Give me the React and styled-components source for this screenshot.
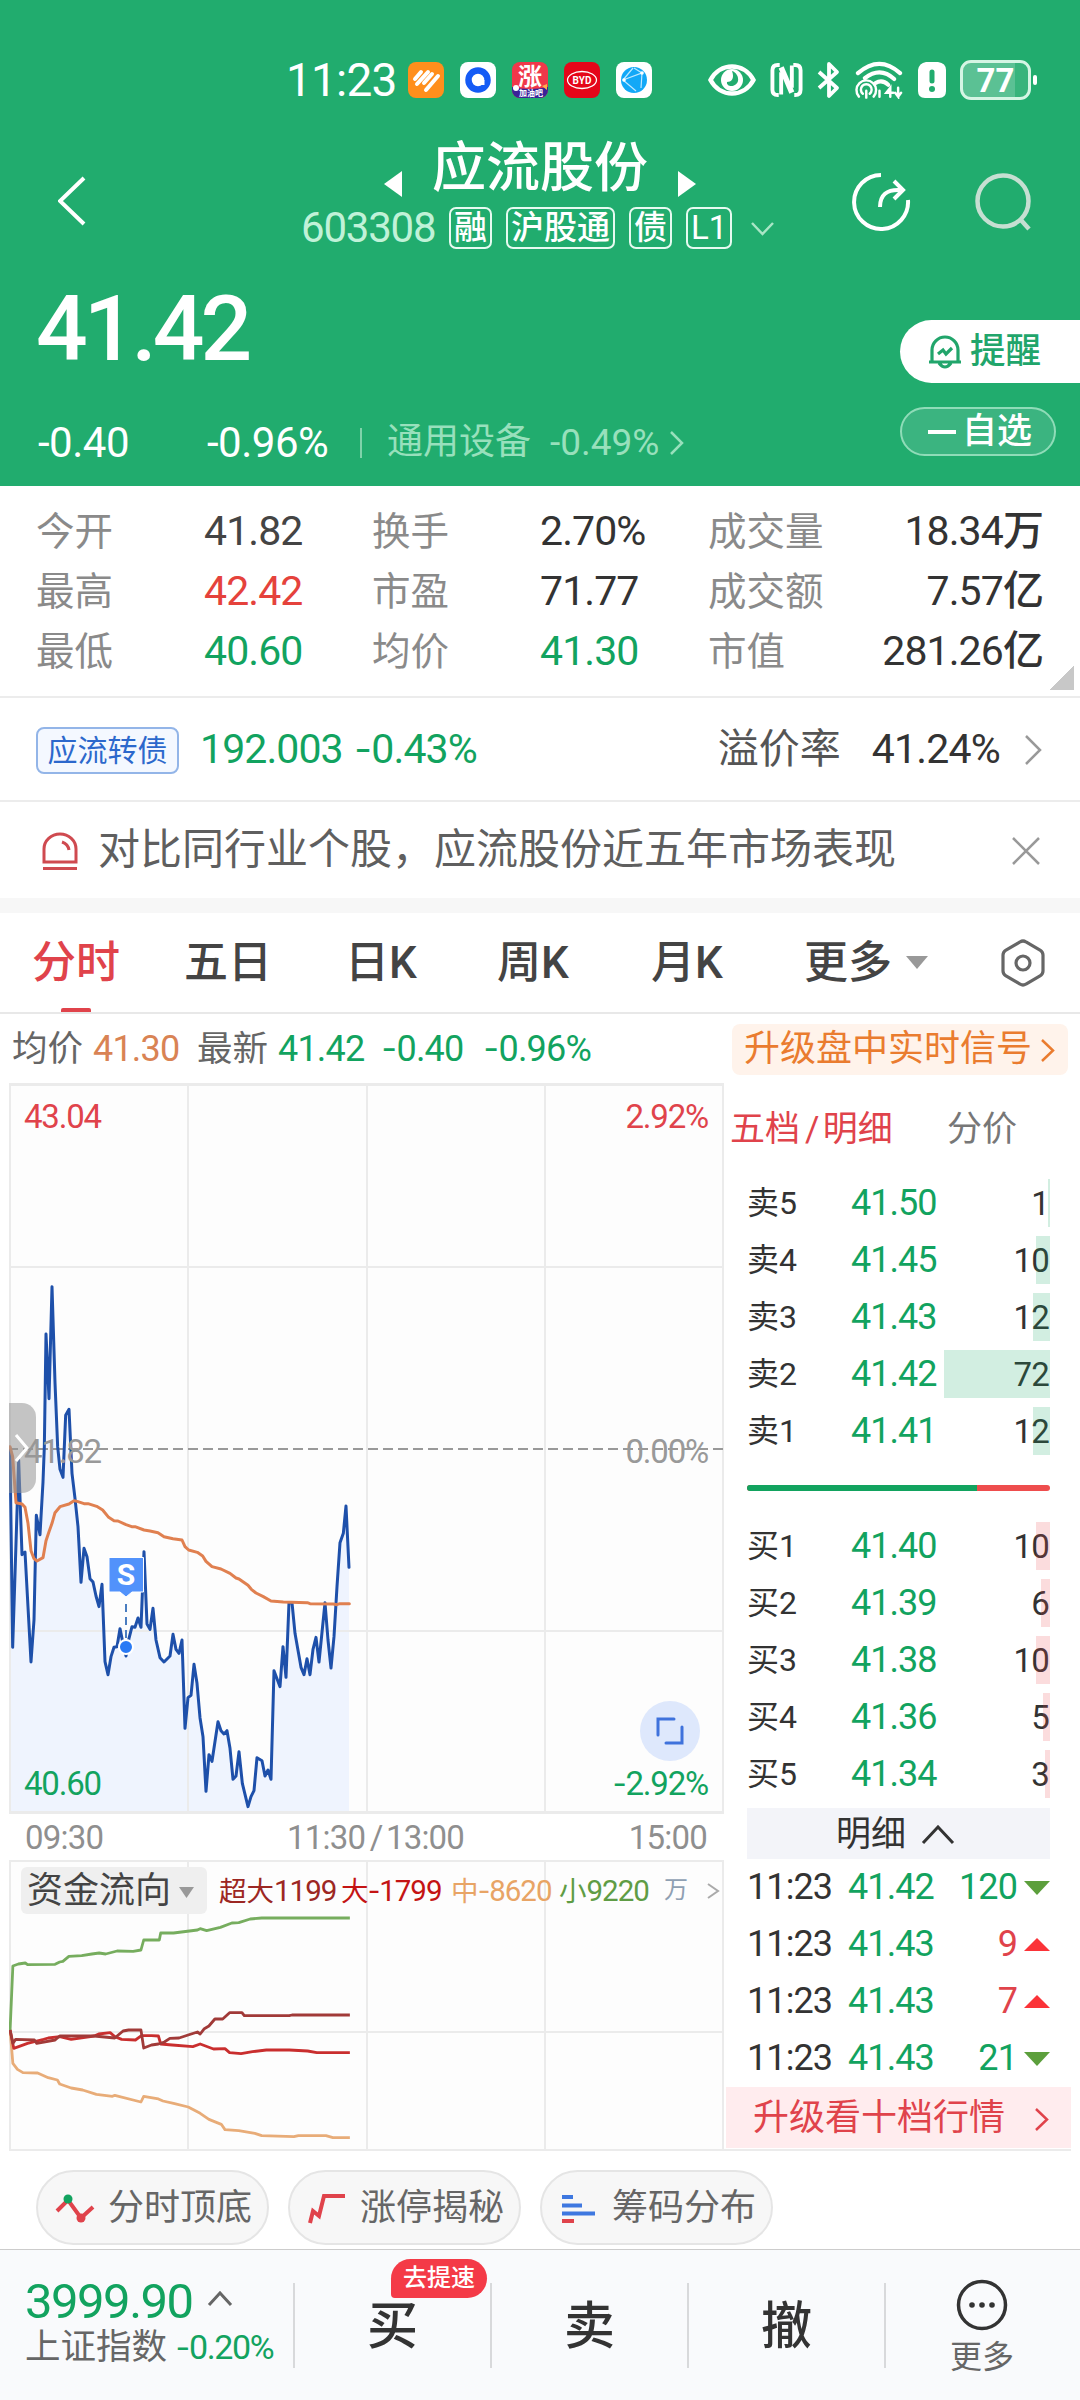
import React from "react";
import styled, { createGlobalStyle } from "styled-components";

const GREEN = "#12a35f";
const RED = "#e0434b";

const stats = [
  ["今开", "41.82", "#444"],
  ["换手", "2.70%", "#333"],
  ["成交量", "18.34万", "#333"],
  ["最高", "42.42", "#e5423c"],
  ["市盈", "71.77", "#333"],
  ["成交额", "7.57亿", "#333"],
  ["最低", "40.60", GREEN],
  ["均价", "41.30", GREEN],
  ["市值", "281.26亿", "#333"],
];

const asks = [
  ["卖5", "41.50", 1, 2],
  ["卖4", "41.45", 10, 14],
  ["卖3", "41.43", 12, 17],
  ["卖2", "41.42", 72, 106],
  ["卖1", "41.41", 12, 17],
];

const bids = [
  ["买1", "41.40", 10, 14],
  ["买2", "41.39", 6, 9],
  ["买3", "41.38", 10, 14],
  ["买4", "41.36", 5, 7],
  ["买5", "41.34", 3, 5],
];

const deals = [
  ["11:23", "41.42", 120, false],
  ["11:23", "41.43", 9, true],
  ["11:23", "41.43", 7, true],
  ["11:23", "41.43", 21, false],
];

// chart series, three units per pixel
const priceLine =
  "30,85 38,682 48,370 56,120 66,404 75,396 93,726 102,600 109,286 120,344 129,186 133,80 138,-258 147,-64 156,-400 165,-112 173,80 180,148 189,172 197,-14 207,-32 216,160 225,235 234,320 243,487 252,385 261,410 270,476 279,486 288,528 297,560 306,493 315,725 324,764 333,710 342,682 351,680 360,626 369,670 378,708 387,655 396,620 405,622 414,594 423,622 432,395 441,612 450,628 459,565 468,660 480,713 492,726 510,708 519,643 528,688 537,700 546,660 555,925 564,833 573,826 582,733 591,790 600,893 609,950 618,1114 627,1004 636,1024 654,905 663,932 672,942 681,932 690,985 699,1078 708,1068 717,995 727,1090 744,1160 753,1130 762,1112 771,1013 786,1022 795,1068 804,1050 813,1078 822,752 840,800 849,680 858,772 867,548 876,548 885,640 903,742 912,764 921,716 930,764 939,688 948,652 957,726 975,548 984,660 993,744 1002,650 1011,500 1020,368 1030,340 1038,258 1047,442";
const avgLine =
  "30,80 38,110 48,248 66,252 75,262 84,310 93,392 102,416 111,423 129,413 138,362 147,335 156,310 165,278 180,260 207,252 222,242 234,245 252,251 264,251 290,259 308,270 326,292 342,302 354,303 378,314 395,320 405,320 432,330 450,333 474,338 492,350 519,356 546,360 555,380 566,390 592,397 608,408 618,424 636,440 663,447 690,460 708,474 717,477 744,496 754,508 768,519 790,530 813,543 850,546 922,548 930,551 1000,552 1010,554 1020,551 1048,551";

const flows = [
  [
    "#e8ac78",
    "22,570 28,670 38,688 50,698 82,699 105,713 125,720 130,732 155,744 180,750 210,763 245,769 250,766 307,786 313,769 345,777 355,783 378,790 410,801 436,820 455,838 482,853 490,869 520,872 555,880 570,887 640,890 650,887 710,887 725,893 762,893",
  ],
  [
    "#76ad5e",
    "22,570 28,378 40,372 55,369 60,374 120,373 130,366 137,364 150,349 178,347 200,342 216,339 230,342 255,333 290,334 307,330 313,300 347,300 350,279 378,279 430,270 436,266 450,272 480,262 505,249 520,248 545,237 570,234 762,234",
  ],
  [
    "#c92e2e",
    "22,570 30,625 60,610 95,598 105,594 130,590 155,598 205,588 215,582 240,578 250,590 265,598 295,600 308,587 330,587 345,588 350,612 375,615 420,620 436,612 465,627 490,626 500,638 525,641 550,635 580,630 630,630 670,633 690,638 762,638",
  ],
  [
    "#a13a38",
    "22,570 28,610 34,598 75,600 80,610 120,600 130,588 205,588 250,594 268,573 280,570 307,570 313,624 330,615 345,612 358,606 370,595 390,594 430,576 436,582 445,566 455,558 468,537 485,537 500,518 527,518 532,527 630,527 636,525 762,525",
  ],
];

const arrows = {
  left: (w, h) => `M${w - 2} 2L2 ${h / 2}L${w - 2} ${h - 2}`,
  right: (w, h) => `M2 2L${w - 2} ${h / 2}L2 ${h - 2}`,
  up: (w, h) => `M2 ${h - 2}L${w / 2} 2L${w - 2} ${h - 2}`,
  down: (w, h) => `M2 2L${w / 2} ${h - 2}L${w - 2} 2`,
};

function Chevron({ dir = "right", w, h, color, thick = 2.5 }) {
  return (
    <svg width={w} height={h} fill="none">
      <path d={arrows[dir](w, h)} stroke={color} strokeWidth={thick} />
    </svg>
  );
}

function Triangle({ points, w, h, color }) {
  return (
    <svg width={w} height={h}>
      <polygon points={points} fill={color} />
    </svg>
  );
}

function StatusIcons() {
  return (
    <>
      <AppIcons>
        <svg width="36" height="36" viewBox="0 0 36 36">
          <rect width="36" height="36" rx="8" fill="#ff8f1c" />
          <path d="M7 17L13 10M9 22L20 10M16 21L24 12M18 28L30 14" stroke="#fff" strokeWidth="4" strokeLinecap="round" />
        </svg>
        <svg width="36" height="36" viewBox="0 0 36 36">
          <rect width="36" height="36" rx="8" fill="#fff" />
          <circle cx="18" cy="18" r="9.5" fill="none" stroke="#155bf5" strokeWidth="6.5" />
          <path d="M18 18h6.500v5h-4z" fill="#fff" />
        </svg>
        <svg width="36" height="36" viewBox="0 0 36 36">
          <rect width="36" height="36" rx="8" fill="#f0384a" />
          <path d="M0 25q18 4 36 0v3a8 8 0 0 1-8 8H8a8 8 0 0 1-8-8z" fill="#3a2298" />
          <circle cx="4" cy="26" r="3" fill="#fff" />
          <path d="M30 24l5-2v6z" fill="#ffb24a" />
          <IconText x="18" y="23" $size={24}>涨</IconText>
          <IconText x="19" y="34" $size={8}>加油吧</IconText>
        </svg>
        <svg width="36" height="36" viewBox="0 0 36 36">
          <rect width="36" height="36" rx="8" fill="#e50619" />
          <ellipse cx="18" cy="18" rx="14.500" ry="8.5" fill="none" stroke="#fff" strokeWidth="1.3" />
          <IconText x="18" y="21.5" $size={10}>BYD</IconText>
        </svg>
        <svg width="36" height="36" viewBox="0 0 36 36">
          <rect width="36" height="36" rx="8" fill="#fff" />
          <circle cx="18" cy="18" r="13" fill="#12a8f7" />
          <path d="M7 18L26 11L25 26M7 18L20 29M7 18L17 6M26 11L18 6" stroke="#bfe8ff" strokeWidth="1.2" fill="none" />
          <circle cx="8" cy="18" r="1.8" fill="#fff" />
          <circle cx="26" cy="11" r="1.8" fill="#fff" />
        </svg>
      </AppIcons>
      <svg width="48" height="34" viewBox="0 0 48 34">
        <path d="M2.5 17C12-1 36-1 45.500 17C36 35 12 35 2.500 17Z" fill="none" stroke="#fff" strokeWidth="4.500" />
        <circle cx="24" cy="17" r="11" fill="#fff" />
        <path d="M24 8C27 16 23 19 19 19C18 24 28 25 30 18C31 14 28 9 24 8Z" fill="#21ac6e" />
      </svg>
      <svg width="33" height="36" viewBox="0 0 34 36" fill="none" stroke="#fff">
        <path d="M10 2.500H8Q2.500 2.500 2.500 8V28Q2.500 33.500 8 33.500H9M24 2.500H26Q31.500 2.500 31.500 8V28Q31.500 33.500 26 33.500H25" strokeWidth="4" />
        <path d="M11.500 33V10M22.500 3V26" strokeWidth="4" />
        <path d="M11.500 5L22.500 31" strokeWidth="5.500" />
      </svg>
      <svg width="24" height="38" viewBox="0 0 24 38">
        <path d="M2 11L20 27L12 35V3L20 11L2 27" stroke="#fff" strokeWidth="3.800" fill="none" strokeLinejoin="round" />
      </svg>
      <svg width="49" height="38" viewBox="0 0 50 38">
        <g stroke="#fff" fill="none" strokeWidth="4.200" strokeLinecap="round">
          <path d="M3 12Q25-7 46 12" />
          <path d="M10 17Q26 5 40 18" />
          <path d="M21 22Q28 18 34 24" />
        </g>
        <g stroke="#fff" fill="none" strokeWidth="2.500" strokeLinecap="round">
          <path d="M4 36a10 10 0 1 1 15 0M8 33a5.500 5.500 0 1 1 7 0M11.500 30v7" />
          <path d="M25 30v6M36 36V27l-4 5h7M44 27v9l-3-4M44 36l3-4" />
        </g>
      </svg>
      <svg width="28" height="36" viewBox="0 0 28 36">
        <path d="M8 0H20Q28 1 28 8V29Q28 36 21 36H7Q0 36 0 29V8Q1 1 8 0Z" fill="#fff" />
        <path d="M14 10V19" stroke="#21ac6e" strokeWidth="5" strokeLinecap="round" />
        <circle cx="14" cy="27" r="3" fill="#21ac6e" />
      </svg>
      <Battery>77</Battery>
      <BatteryTip />
    </>
  );
}

function Header() {
  return (
    <Top>
      <StatusBar>
        <Clock>11:23</Clock>
        <StatusIcons />
      </StatusBar>
      <TitleBar>
        <Back>
          <Chevron dir="left" w={28} h={50} color="#fff" thick={4} />
        </Back>
        <TitleBox>
          <TitleRow>
            <Triangle points="18,0 18,26 0,13" w={18} h={26} color="#fff" />
            <Title>应流股份</Title>
            <Triangle points="0,0 18,13 0,26" w={18} h={26} color="#fff" />
          </TitleRow>
          <CodeRow>
            <Code>603308</Code>
            <Tag>融</Tag>
            <Tag>沪股通</Tag>
            <Tag>债</Tag>
            <Tag>L1</Tag>
            <CodeArrow>
              <Chevron dir="down" w={25} h={15} color="#a9e6c6" />
            </CodeArrow>
          </CodeRow>
        </TitleBox>
        <Actions>
          <svg width="60" height="60" viewBox="0 0 60 60" fill="none" stroke="#fff" strokeWidth="4">
            <path d="M29 3A27 27 0 1 0 56 28" />
            <path d="M28 35Q28 17 48 18M42 9L51 18L42 27" />
          </svg>
          <svg width="58" height="60" viewBox="0 0 58 60" fill="none" stroke="#c6dfd2" strokeWidth="4.500">
            <circle cx="28" cy="29" r="25.500" />
            <path d="M45 47L54 57" />
          </svg>
        </Actions>
      </TitleBar>
      <PriceBlock>
        <div>
          <Price>41.42</Price>
          <ChangeRow>
            <Change $width={169}>-0.40</Change>
            <Change>-0.96%</Change>
            <Bar />
            <Industry>通用设备</Industry>
            <IndustryChange>-0.49%</IndustryChange>
            <Chevron w={15} h={26} color="#98e0bc" />
          </ChangeRow>
        </div>
        <PillColumn>
          <Remind>
            <svg width="34" height="36" viewBox="0 0 34 36" fill="none" stroke="#21a56b" strokeWidth="3.200">
              <path d="M4 27V16a13 13 0 0 1 26 0V27M1 28H33M11 29q6 8 12 0" />
              <path d="M10 20L15 16L18 20L24 14" />
            </svg>
            提醒
          </Remind>
          <Favorite>
            <Dash />
            自选
          </Favorite>
        </PillColumn>
      </PriceBlock>
    </Top>
  );
}

function Chart() {
  return (
    <ChartBox>
      <svg width="716" height="731" viewBox="9 1083 716 731" fill="none">
        <rect x="10" y="1085" width="713" height="728" fill="#fdfdfd" />
        <g transform="translate(0 1420) scale(0.33333)">
          <polygon points={`30,1178 ${priceLine} 1047,1178`} fill="#eff4fe" />
        </g>
        <path d="M10 1084V1813M188 1084V1813M367 1084V1813M545 1084V1813M723 1084V1813M9 1267H724M9 1631H724" stroke="#ebebeb" strokeWidth="2" />
        <path d="M9 1084.500H724M9 1812.500H724" stroke="#ebebeb" strokeWidth="3" />
        <path d="M8 1449H724" stroke="#999" strokeWidth="2" strokeDasharray="10 5" />
        <g transform="translate(0 1420) scale(0.33333)" strokeLinejoin="round" strokeLinecap="round">
          <polyline points={priceLine} stroke="#1e50aa" strokeWidth="9" />
          <polyline points={avgLine} stroke="#e08050" strokeWidth="9" />
        </g>
        <path d="M126 1604V1640" stroke="#4a7dc0" strokeWidth="2" strokeDasharray="8 5" />
        <circle cx="126" cy="1647" r="7" fill="#2a7af5" stroke="#fff" strokeWidth="2" />
        <path d="M109 1557.500H143.500V1592H132L126 1597L120 1592H109Z" fill="#5292fb" stroke="#fff" strokeWidth="1" />
      </svg>
      <Signal>S</Signal>
      <ScaleText $left={15} $top={15} $color={RED}>43.04</ScaleText>
      <ScaleText $right={17} $top={15} $color={RED}>2.92%</ScaleText>
      <ScaleText $left={15} $top={350} $color="#999">41.82</ScaleText>
      <ScaleText $right={17} $top={350} $color="#999">0.00%</ScaleText>
      <ScaleText $left={15} $top={682} $color={GREEN}>40.60</ScaleText>
      <ScaleText $right={17} $top={682} $color={GREEN}>
        <Minus>-</Minus>2.92%
      </ScaleText>
      <Handle>
        <Chevron w={15} h={30} color="#fff" thick={3} />
      </Handle>
      <Expand>
        <svg width="30" height="30" viewBox="0 0 30 30" fill="none" stroke="#3f72dc" strokeWidth="3" strokeLinecap="round">
          <path d="M3 19V3H19M27 11V27H11" />
        </svg>
      </Expand>
    </ChartBox>
  );
}

function FlowChart() {
  return (
    <FlowBox>
      <svg width="716" height="291" viewBox="9 1860 716 291" fill="none">
        <rect x="10" y="1861" width="713" height="289" fill="#fdfdfd" />
        <path d="M9 1861H724M9 2032H724M9 2150H724M10 1861V2150M188 1861V2150M367 1861V2150M545 1861V2150M723 1861V2150" stroke="#ebebeb" strokeWidth="2" />
        <g transform="translate(0 1840) scale(0.45914 0.33333)" strokeLinejoin="round">
          {flows.map(([color, points]) => (
            <polyline key={color} points={points} stroke={color} strokeWidth="2.800" vectorEffect="non-scaling-stroke" />
          ))}
        </g>
      </svg>
      <FlowHead>
        <FlowSelect>
          资金流向
          <Triangle points="0,0 15,0 7.5,11" w={15} h={11} color="#999" />
        </FlowSelect>
        <Legend $color="#9c2723" $width={122}>超大<b>1199</b></Legend>
        <Legend $color="#c41414" $width={110}>大<b><Minus>-</Minus>1799</b></Legend>
        <Legend $color="#e8a465" $width={108}>中<b><Minus>-</Minus>8620</b></Legend>
        <Legend $color="#5f9c45" $width={105}>小<b>9220</b></Legend>
        <Unit>万</Unit>
        <Chevron w={14} h={18} color="#aaa" thick={2} />
      </FlowHead>
    </FlowBox>
  );
}

function Level({ row, tint }) {
  const [name, price, qty, bar] = row;
  return (
    <LevelRow>
      <LevelName>{name}</LevelName>
      <LevelPrice>{price}</LevelPrice>
      <LevelQty>
        <QtyBar $tint={tint} style={{ width: bar }} />
        {qty}
      </LevelQty>
    </LevelRow>
  );
}

function OrderBook() {
  return (
    <Book>
      <BookTabs>
        <BookTab $active>
          五档<Slash>/</Slash>明细
        </BookTab>
        <BookTab>分价</BookTab>
      </BookTabs>
      {asks.map((row) => (
        <Level key={row[0]} row={row} tint="rgba(18, 163, 95, 0.19)" />
      ))}
      <Ratio>
        <i />
      </Ratio>
      {bids.map((row) => (
        <Level key={row[0]} row={row} tint="rgba(235, 70, 75, 0.19)" />
      ))}
      <DealHead>
        明细
        <Chevron dir="up" w={34} h={20} color="#333" thick={3} />
      </DealHead>
      {deals.map(([time, price, qty, up], i) => (
        <Deal key={i}>
          <DealTime>{time}</DealTime>
          <DealPrice>{price}</DealPrice>
          <DealQty $up={up}>{qty}</DealQty>
          <Triangle
            points={up ? "0,13 13,0 26,13" : "0,0 26,0 13,14"}
            w={26}
            h={14}
            color={up ? "#fb3338" : "#5c9f3c"}
          />
        </Deal>
      ))}
      <Upgrade>
        升级看十档行情
        <Chevron w={15} h={25} color={RED} />
      </Upgrade>
    </Book>
  );
}

function App() {
  return (
    <Page>
      <GlobalStyle />
      <Header />

      <Stats>
        {stats.map(([label, value, color], i) => (
          <React.Fragment key={label}>
            <StatLabel>{label}</StatLabel>
            <StatValue $color={color} $end={i % 3 === 2}>{value}</StatValue>
          </React.Fragment>
        ))}
        <Corner />
      </Stats>

      <BondRow>
        <BondTag>应流转债</BondTag>
        <BondValue $width={156}>192.003</BondValue>
        <BondValue>
          <Minus>-</Minus>0.43%
        </BondValue>
        <PremiumLabel>溢价率</PremiumLabel>
        <Premium>41.24%</Premium>
        <Chevron w={18} h={32} color="#999" />
      </BondRow>

      <Notice>
        <svg width="38" height="40" viewBox="0 0 38 40" fill="none" stroke="#cf4a50" strokeWidth="3">
          <path d="M3 31V18a16 15 0 0 1 32 0V31ZM2 37.500H36" />
          <path d="M21 11q6 2 7 8" />
        </svg>
        <NoticeText>对比同行业个股，应流股份近五年市场表现</NoticeText>
        <svg width="28" height="28" stroke="#999" strokeWidth="2.500">
          <path d="M1 1L27 27M27 1L1 27" />
        </svg>
      </Notice>

      <Tabs>
        <Tab $active $width={152}>分时</Tab>
        <Tab $width={161}>五日</Tab>
        <Tab $width={152}>日K</Tab>
        <Tab $width={154}>周K</Tab>
        <Tab $width={153}>月K</Tab>
        <Tab $width={102}>更多</Tab>
        <Triangle points="0,0 22,0 11,13" w={22} h={13} color="#999" />
        <Hex width="44" height="48" viewBox="0 0 44 48" fill="none" stroke="#666" strokeWidth="3.200">
          <path d="M19 3Q22 1 25 3L39 11Q42 13 42 16V32Q42 35 39 37L25 45Q22 47 19 45L5 37Q2 35 2 32V16Q2 13 5 11Z" />
          <circle cx="22" cy="24" r="7" />
        </Hex>
      </Tabs>

      <Quote>
        <QuoteLabel>均价</QuoteLabel>
        <QuoteNum $color="#d98354" $width={104}>41.30</QuoteNum>
        <QuoteLabel>最新</QuoteLabel>
        <QuoteNum $color={GREEN} $width={105}>41.42</QuoteNum>
        <QuoteNum $color={GREEN} $width={102}>
          <Minus>-</Minus>0.40
        </QuoteNum>
        <QuoteNum $color={GREEN}>
          <Minus>-</Minus>0.96%
        </QuoteNum>
        <SignalLink>
          升级盘中实时信号
          <Chevron w={15} h={25} color="#ea7c2f" />
        </SignalLink>
      </Quote>

      <Market>
        <Charts>
          <Chart />
          <TimeAxis>
            <span>09:30</span>
            <span>
              11:30<Slash>/</Slash>13:00
            </span>
            <span>15:00</span>
          </TimeAxis>
          <FlowChart />
        </Charts>
        <OrderBook />
      </Market>

      <Tools>
        <Tool>
          <svg width="40" height="32" viewBox="0 0 40 32" fill="none" stroke={RED} strokeWidth="4">
            <path d="M2 18L13 7L26 25L38 14" />
            <circle cx="13" cy="6" r="4.500" fill={GREEN} stroke="none" />
            <circle cx="26" cy="25" r="4.500" fill={RED} stroke="none" />
          </svg>
          分时顶底
        </Tool>
        <Tool>
          <svg width="40" height="32" viewBox="0 0 40 32" fill="none" stroke={RED} strokeWidth="4">
            <path d="M3 30L6 18L12 23L17 3H38" />
          </svg>
          涨停揭秘
        </Tool>
        <Tool>
          <svg width="40" height="32" viewBox="0 0 40 32" strokeWidth="4">
            <path d="M3 4H14M3 12.500H23M3 20.500H36" stroke="#3f78e0" />
            <path d="M3 28H15" stroke={RED} />
          </svg>
          筹码分布
        </Tool>
      </Tools>

      <BottomBar>
        <IndexBox>
          <IndexTop>
            3999.90
            <Chevron dir="up" w={26} h={16} color="#666" thick={3} />
          </IndexTop>
          <IndexBottom>
            上证指数
            <b>
              <Minus>-</Minus>0.20%
            </b>
          </IndexBottom>
        </IndexBox>
        <Trade>
          买
          <SpeedBadge>去提速</SpeedBadge>
        </Trade>
        <Trade>卖</Trade>
        <Trade>撤</Trade>
        <More>
          <svg width="52" height="52" viewBox="0 0 52 52">
            <circle cx="26" cy="26" r="23.500" fill="none" stroke="#333" strokeWidth="3.500" />
            <g fill="#333">
              <circle cx="16" cy="26" r="2.800" />
              <circle cx="26" cy="26" r="2.800" />
              <circle cx="36" cy="26" r="2.800" />
            </g>
          </svg>
          更多
        </More>
      </BottomBar>
    </Page>
  );
}

export default App;

const GlobalStyle = createGlobalStyle`
  * {
    box-sizing: border-box;
  }
  body {
    margin: 0;
    background: #fff;
  }
  svg {
    display: block;
    flex-shrink: 0;
  }
  b, i {
    font-weight: inherit;
    font-style: normal;
  }
`;

const Page = styled.div`
  width: 1080px;
  height: 2400px;
  overflow: hidden;
  display: flex;
  flex-direction: column;
  font-family: Roboto, "Noto Sans CJK SC", sans-serif;
  line-height: 1.2;
  color: #333;
  white-space: nowrap;
`;

// Roboto's hyphen is short for a minus sign
const Minus = styled.span`
  display: inline-block;
  transform: scaleX(1.25);
  transform-origin: left;
  margin-right: 0.12em;
`;

const Slash = styled.span`
  margin: 0 0.1em 0 0.14em;
`;

const Top = styled.header`
  height: 486px;
  flex-shrink: 0;
  background: #21ac6e;
  color: #fff;
`;

const StatusBar = styled.div`
  height: 106px;
  padding: 54px 41px 0 286px;
  display: flex;
  align-items: center;
`;

const Clock = styled.div`
  width: 122px;
  flex-shrink: 0;
  font-size: 46px;
  line-height: 52px;
  letter-spacing: -0.8px;
`;

const AppIcons = styled.div`
  display: flex;
  gap: 16px;
  margin-right: 56px;

  & ~ svg {
    margin-right: 14px;
  }
`;

const IconText = styled.text`
  font-size: ${(p) => p.$size}px;
  font-weight: 700;
  fill: #fff;
  text-anchor: middle;
`;

const Battery = styled.div`
  width: 71px;
  height: 40px;
  flex-shrink: 0;
  border: 3px solid #d5f5e4;
  border-radius: 11px;
  background: linear-gradient(90deg, #5bc194 80%, #38b47c 80%);
  font-size: 33px;
  font-weight: 700;
  line-height: 35px;
  text-align: center;
`;

const BatteryTip = styled.div`
  width: 4px;
  height: 10px;
  flex-shrink: 0;
  margin-left: 2px;
  border-radius: 2px;
  background: #fff;
`;

const TitleBar = styled.div`
  height: 148px;
  display: grid;
  grid-template-columns: 301px 472px 1fr;
`;

const Back = styled.div`
  padding: 70px 0 0 58px;
`;

const TitleBox = styled.div`
  padding-top: 30px;
`;

const TitleRow = styled.div`
  height: 60px;
  display: flex;
  justify-content: center;
  align-items: flex-end;
  gap: 30px;
  padding-left: 6px;

  svg {
    margin-bottom: -1px;
  }
`;

const Title = styled.h1`
  margin: 0;
  font-size: 54px;
  font-weight: 500;
  line-height: 66px;
  height: 60px;
`;

const CodeRow = styled.div`
  height: 42px;
  margin-top: 11px;
  display: flex;
  align-items: center;
`;

const Code = styled.span`
  width: 148px;
  flex-shrink: 0;
  font-size: 42px;
  letter-spacing: -1.2px;
  color: #c0f2d8;
`;

const Tag = styled.span`
  height: 42px;
  min-width: 43px;
  flex-shrink: 0;
  margin-right: 14px;
  padding: 0 3px;
  border: 2px solid #e6faf0;
  border-radius: 7px;
  font-size: 33px;
  font-weight: 450;
  line-height: 38px;
  text-align: center;
`;

const CodeArrow = styled.span`
  margin-left: 4px;
`;

const Actions = styled.div`
  display: flex;
  gap: 63px;
  padding: 66px 0 0 79px;
`;

const PriceBlock = styled.div`
  height: 232px;
  display: flex;
  justify-content: space-between;
`;

const Price = styled.div`
  padding: 34px 0 0 36px;
  font-size: 91px;
  font-weight: 500;
  line-height: 83px;
  letter-spacing: -4px;
`;

const ChangeRow = styled.div`
  height: 44px;
  margin-top: 50px;
  padding-left: 38px;
  display: flex;
  align-items: center;
`;

const Change = styled.span`
  width: ${(p) => (p.$width ? p.$width + "px" : "153px")};
  font-size: 42px;
  font-weight: 450;
  letter-spacing: -0.5px;
`;

const Bar = styled.span`
  width: 2px;
  height: 30px;
  margin-right: 25px;
  background: #7fd3aa;
`;

const Industry = styled.span`
  width: 163px;
  font-size: 36px;
  color: #98e0bc;
`;

const IndustryChange = styled.span`
  width: 119px;
  font-size: 37px;
  color: #98e0bc;
`;

const PillColumn = styled.div`
  width: 180px;
  padding-top: 66px;
`;

const Remind = styled.div`
  height: 63px;
  display: flex;
  align-items: center;
  gap: 8px;
  padding-left: 28px;
  border-radius: 32px 0 0 32px;
  background: #fff;
  color: #21a56b;
  font-size: 35.5px;
  font-weight: 500;
`;

const Favorite = styled.div`
  width: 156px;
  height: 49px;
  margin-top: 24px;
  padding: 1px 0 0 26px;
  display: flex;
  align-items: center;
  gap: 6px;
  border: 2px solid #8fdcb8;
  border-radius: 25px;
  background: #3bb480;
  font-size: 35px;
  font-weight: 500;
`;

const Dash = styled.span`
  width: 28px;
  height: 4px;
  background: #fff;
`;

const Stats = styled.section`
  position: relative;
  height: 212px;
  flex-shrink: 0;
  display: grid;
  grid-template-columns: 168px 168px 168px 168px 115px 1fr;
  grid-auto-rows: 60px;
  line-height: 61px;
  padding: 15px 37px 0 36px;
  border-bottom: 2px solid #ececec;
`;

const StatLabel = styled.span`
  font-size: 38.5px;
  color: #8a8a8a;
`;

const StatValue = styled.span`
  font-size: 41px;
  font-weight: 450;
  letter-spacing: -0.9px;
  color: ${(p) => p.$color};
  text-align: ${(p) => (p.$end ? "right" : "left")};
`;

const Corner = styled.i`
  position: absolute;
  right: 6px;
  bottom: 6px;
  width: 24px;
  height: 24px;
  background: linear-gradient(135deg, transparent 50%, #c8c8c8 50%);
`;

const BondRow = styled.section`
  height: 104px;
  flex-shrink: 0;
  padding: 2px 38px 0 36px;
  display: flex;
  align-items: center;
  border-bottom: 2px solid #ececec;
`;

const BondTag = styled.span`
  width: 143px;
  height: 47px;
  margin-right: 21px;
  border: 2px solid #93b5e8;
  border-radius: 8px;
  background: #f4f8ff;
  color: #2c68cc;
  font-size: 30px;
  line-height: 44px;
  text-align: center;
`;

const BondValue = styled.span`
  width: ${(p) => (p.$width ? p.$width + "px" : "auto")};
  color: ${GREEN};
  font-size: 41px;
  font-weight: 450;
  letter-spacing: -0.9px;
`;

const PremiumLabel = styled.span`
  margin-left: auto;
  font-size: 41px;
  color: #555;
`;

const Premium = styled.span`
  margin: 0 24px 0 31px;
  font-size: 41px;
  font-weight: 450;
  letter-spacing: -0.8px;
`;

const Notice = styled.section`
  height: 111px;
  flex-shrink: 0;
  padding: 1px 40px 0 41px;
  display: flex;
  align-items: center;
  border-bottom: 15px solid #f7f7f7;
`;

const NoticeText = styled.span`
  margin: 0 auto 0 19px;
  color: #5f5f5f;
  font-size: 42px;
`;

const Tabs = styled.nav`
  height: 101px;
  flex-shrink: 0;
  padding-left: 32px;
  display: flex;
  align-items: center;
  border-bottom: 2px solid #e8e8e8;
`;

const Tab = styled.span`
  position: relative;
  width: ${(p) => p.$width}px;
  height: 99px;
  font-size: 44px;
  font-weight: 500;
  line-height: 101px;
  color: ${(p) => (p.$active ? RED : "#444")};

  &::after {
    content: "";
    display: ${(p) => (p.$active ? "block" : "none")};
    position: absolute;
    left: 29px;
    bottom: 0;
    width: 30px;
    height: 4px;
    border-radius: 2px 2px 0 0;
    background: ${RED};
  }
`;

const Hex = styled.svg`
  margin-left: 73px;
`;

const Quote = styled.div`
  height: 69px;
  flex-shrink: 0;
  padding: 1px 12px 0;
  display: flex;
  align-items: center;
`;

const QuoteLabel = styled.span`
  width: 81px;
  padding-top: 1px;
  font-size: 35.5px;
  color: #666;
`;

const QuoteNum = styled.span`
  width: ${(p) => (p.$width ? p.$width + "px" : "auto")};
  padding-top: 1px;
  font-size: 36px;
  font-weight: 450;
  letter-spacing: -0.8px;
  color: ${(p) => p.$color};
`;

const SignalLink = styled.div`
  width: 336px;
  height: 51px;
  margin-left: auto;
  padding: 2px 13px 0 12px;
  display: flex;
  align-items: center;
  justify-content: space-between;
  border-radius: 8px;
  background: #fff3eb;
  color: #ea7c2f;
  font-size: 36px;
`;

const Market = styled.section`
  height: 1068px;
  flex-shrink: 0;
  width: 1062px;
  margin-left: 9px;
  display: flex;
  border-bottom: 2px solid #ebebeb;
`;

const Charts = styled.div`
  width: 716px;
`;

const ChartBox = styled.div`
  position: relative;
  height: 731px;
`;

const ScaleText = styled.span`
  position: absolute;
  top: ${(p) => p.$top}px;
  ${(p) => (p.$left ? `left: ${p.$left}px;` : `right: ${p.$right}px;`)}
  font-size: 33px;
  font-weight: 450;
  line-height: 38px;
  letter-spacing: -1.2px;
  color: ${(p) => p.$color};
`;

const Signal = styled.span`
  position: absolute;
  left: 100px;
  top: 475px;
  width: 34px;
  color: #fff;
  font-size: 30px;
  font-weight: 700;
  line-height: 34px;
  text-align: center;
`;

const Handle = styled.div`
  position: absolute;
  left: 0;
  top: 320px;
  width: 27px;
  height: 90px;
  display: flex;
  align-items: center;
  padding-left: 5px;
  border-radius: 0 14px 14px 0;
  background: rgba(150, 150, 150, 0.55);
`;

const Expand = styled.div`
  position: absolute;
  left: 631px;
  top: 618px;
  width: 60px;
  height: 60px;
  display: grid;
  place-items: center;
  border-radius: 50%;
  background: #dee8fc;
`;

const TimeAxis = styled.div`
  height: 46px;
  display: grid;
  grid-template-columns: 262px 1fr auto;
  padding: 0 18px 0 16px;
  font-size: 33px;
  line-height: 48px;
  letter-spacing: -0.8px;
  color: #8f8f8f;
`;

const FlowBox = styled.div`
  position: relative;
`;

const FlowHead = styled.div`
  position: absolute;
  left: 12px;
  top: 7px;
  height: 47px;
  display: flex;
  align-items: center;
`;

const FlowSelect = styled.div`
  width: 186px;
  height: 47px;
  margin-right: 12px;
  padding: 3px 13px 0 6px;
  display: flex;
  align-items: center;
  justify-content: space-between;
  border-radius: 6px;
  background: #efefef;
  color: #444;
  font-size: 36px;
`;

const Legend = styled.span`
  width: ${(p) => p.$width}px;
  padding-top: 2px;
  color: ${(p) => p.$color};
  font-size: 27.5px;

  b {
    font-size: 29.5px;
    font-weight: 450;
    letter-spacing: -1px;
  }
`;

const Unit = styled.span`
  width: 42px;
  font-size: 24px;
  color: #8fa0b3;
`;

const Book = styled.aside`
  width: 346px;
`;

const BookTabs = styled.div`
  height: 91px;
  padding: 3px 0 0 5px;
  display: flex;
  align-items: center;
  gap: 54px;
`;

const BookTab = styled.span`
  font-size: 35px;
  color: ${(p) => (p.$active ? RED : "#777")};
`;

const LevelRow = styled.div`
  height: 57px;
  margin: 0 21px 0 22px;
  display: flex;
  align-items: center;
`;

const LevelName = styled.span`
  width: 104px;
  padding-top: 2px;
  font-size: 32px;
`;

const LevelPrice = styled.span`
  width: 90px;
  padding-top: 2px;
  font-size: 36px;
  font-weight: 450;
  letter-spacing: -1px;
  color: ${GREEN};
`;

const LevelQty = styled.span`
  position: relative;
  flex: 1;
  height: 48px;
  padding-right: 1px;
  font-size: 33px;
  line-height: 49px;
  letter-spacing: -0.8px;
  text-align: right;
`;

const QtyBar = styled.i`
  position: absolute;
  right: 0;
  top: 0;
  height: 48px;
  background: ${(p) => p.$tint};
`;

const Ratio = styled.div`
  height: 6px;
  margin: 26px 21px 26px 22px;
  border-radius: 3px;
  background: #ee4d4d;

  i {
    display: block;
    width: 230px;
    height: 6px;
    border-radius: 3px 0 0 3px;
    background: ${GREEN};
  }
`;

const DealHead = styled.div`
  height: 51px;
  margin: 6px 21px 0 22px;
  padding: 2px 6px 0 0;
  display: flex;
  align-items: center;
  justify-content: center;
  gap: 15px;
  background: #f3f4f9;
  font-size: 35px;
`;

const Deal = styled.div`
  height: 57px;
  padding-top: 1px;
  margin: 0 21px 0 22px;
  display: flex;
  align-items: center;
  font-size: 36px;
  letter-spacing: -0.9px;
`;

const DealTime = styled.span`
  width: 101px;
`;

const DealPrice = styled.span`
  width: 90px;
  font-weight: 450;
  color: ${GREEN};
`;

const DealQty = styled.span`
  flex: 1;
  margin-right: 7px;
  font-weight: 450;
  text-align: right;
  color: ${(p) => (p.$up ? RED : GREEN)};
`;

const Upgrade = styled.div`
  height: 61px;
  margin-left: 1px;
  padding: 3px 22px 0 27px;
  display: flex;
  align-items: center;
  justify-content: space-between;
  background: #ffecee;
  color: ${RED};
  font-size: 36px;
`;

const Tools = styled.section`
  height: 98px;
  flex-shrink: 0;
  padding: 19px 36px 0;
  display: flex;
  gap: 19px;
`;

const Tool = styled.div`
  width: 233px;
  height: 75px;
  flex-shrink: 0;
  padding: 3px 0 0 17px;
  display: flex;
  align-items: center;
  gap: 13px;
  border: 2px solid #e5e5e5;
  border-radius: 38px;
  background: #f7f7f7;
  color: #666;
  font-size: 36px;
`;

const BottomBar = styled.footer`
  flex: 1;
  display: flex;
  border-top: 1px solid #ccc;
  background: #f9fafc;
`;

const IndexBox = styled.div`
  width: 293px;
  padding: 28px 0 0 25px;
`;

const IndexTop = styled.div`
  display: flex;
  align-items: center;
  gap: 14px;
  color: ${GREEN};
  font-size: 49px;
  font-weight: 450;
  line-height: 47px;
  letter-spacing: -1.5px;

  svg {
    margin-top: -5px;
  }
`;

const IndexBottom = styled.div`
  font-size: 35.5px;
  line-height: 44px;
  color: #666;

  b {
    margin-left: 10px;
    font-size: 34px;
    font-weight: 450;
    letter-spacing: -1.4px;
    color: ${GREEN};
  }
`;

const Trade = styled.div`
  position: relative;
  width: 197px;
  height: 85px;
  margin-top: 33px;
  border-left: 2px solid #d8d9db;
  font-size: 51px;
  font-weight: 500;
  line-height: 87px;
  text-align: center;
`;

const SpeedBadge = styled.span`
  position: absolute;
  left: 96px;
  top: -24px;
  width: 96px;
  height: 39px;
  border-radius: 20px 20px 20px 4px;
  background: #f43a47;
  color: #fff;
  font-size: 24px;
  line-height: 39px;
  text-align: center;
`;

const More = styled.div`
  flex: 1;
  padding-top: 29px;
  display: flex;
  flex-direction: column;
  align-items: center;
  font-size: 32px;
  line-height: 53px;
  color: #666;
  position: relative;

  &::before {
    content: "";
    position: absolute;
    left: 0;
    top: 33px;
    width: 2px;
    height: 85px;
    background: #d8d9db;
  }
`;
